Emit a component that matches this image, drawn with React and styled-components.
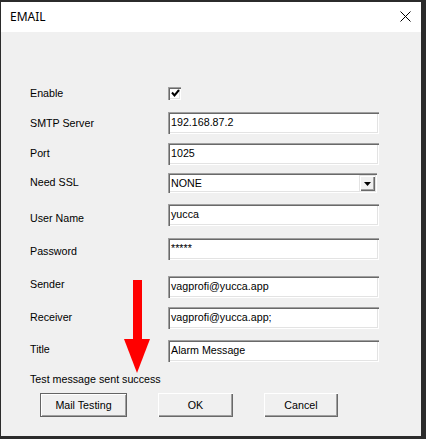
import React from 'react'
import styled, { createGlobalStyle } from 'styled-components'

const GlobalStyle = createGlobalStyle`
    html, body {
        margin: 0;
        padding: 0;
        background: #2b2b2b;
    }
    body {
        font-family: "Liberation Sans", Arial, sans-serif;
    }
`;

const fields = [
    { label: 'SMTP Server', value: '192.168.87.2', top: 8, nudge: 0 },
    { label: 'Port', value: '1025', top: 9, nudge: -1 },
];

const account = [
    { label: 'User Name', value: 'yucca', top: 10, nudge: 3 },
    { label: 'Password', value: '*****', top: 12, nudge: 2 },
    { label: 'Sender', value: 'vagprofi@yucca.app', top: 16, nudge: -3 },
    { label: 'Receiver', value: 'vagprofi@yucca.app;', top: 9, nudge: -1 },
    { label: 'Title', value: 'Alarm Message', top: 11, nudge: -2 },
];

function EmailDialog() {
    return (
        <Window>
            <TitleBar>
                <h1>EMAIL</h1>
                <CloseButton aria-label="close">
                    <svg width="11" height="11" viewBox="0 0 11 11">
                        <path d="M0.5 0.5 L10.5 10.5 M10.5 0.5 L0.5 10.5" stroke="#000" strokeWidth="1" />
                    </svg>
                </CloseButton>
            </TitleBar>
            <Body>
                <Row $top={0}>
                    <Label $nudge={0}>Enable</Label>
                    <CheckBox>
                        <svg width="9" height="9" viewBox="0 0 9 9">
                            <path d="M1 3.5 L3.5 6.5 L8 1" stroke="#000" strokeWidth="2" fill="none" />
                        </svg>
                    </CheckBox>
                </Row>
                {fields.map(({ label, value, top, nudge }) => (
                    <Row key={label} $top={top}>
                        <Label $nudge={nudge}>{label}</Label>
                        <Field>{value}</Field>
                    </Row>
                ))}
                <Row $top={7}>
                    <Label $nudge={-1}>Need SSL</Label>
                    <Select>
                        <span>NONE</span>
                        <DropButton>
                            <svg width="7" height="4" viewBox="0 0 7 4">
                                <path d="M0 0 H7 L3.5 4 Z" fill="#000" />
                            </svg>
                        </DropButton>
                    </Select>
                </Row>
                {account.map(({ label, value, top, nudge }) => (
                    <Row key={label} $top={top}>
                        <Label $nudge={nudge}>{label}</Label>
                        <Field>{value}</Field>
                    </Row>
                ))}
                <Status>Test message sent success</Status>
                <Buttons>
                    <Button $width={87} $default>Mail Testing</Button>
                    <Button $width={75}>OK</Button>
                    <Button $width={74}>Cancel</Button>
                </Buttons>
            </Body>
            <Arrow width="32" height="98" viewBox="0 0 32 98">
                <rect x="12" y="2" width="9" height="61" fill="#ff0000" />
                <path d="M3 61 H29 L16 95 Z" fill="#ff0000" />
            </Arrow>
        </Window>
    )
}

const Window = styled.div`
    position: relative;
    width: 420px;
    height: 434px;
    margin: 2px 0 0 1px;
    background: #f0f0f0;
    display: flex;
    flex-direction: column;
`;

const TitleBar = styled.div`
    height: 30px;
    background: #ffffff;
    display: flex;
    align-items: center;
    justify-content: space-between;
    padding: 0 10px 0 9px;
    h1 {
        margin: 0;
        font-family: "Noto Sans", "Open Sans", sans-serif;
        font-size: 12px;
        font-weight: 400;
        color: #000;
        padding-bottom: 1px;
    }
`;

const CloseButton = styled.div`
    display: flex;
    margin-top: -1px;
`;

const Body = styled.div`
    padding: 50px 0 0 29px;
    display: flex;
    flex-direction: column;
    font-size: 10.7px;
    color: #000;
`;

const Row = styled.div`
    display: flex;
    align-items: center;
    height: 22px;
    margin-top: ${p => p.$top}px;
`;

const Label = styled.div`
    width: 138px;
    align-self: flex-start;
    line-height: 12px;
    padding-top: ${p => 5 + p.$nudge}px;
`;

const sunken = `
    background: #ffffff;
    box-sizing: border-box;
    box-shadow:
        inset 1px 1px 0 #a0a0a0,
        inset 2px 2px 0 #696969,
        inset -1px -1px 0 #ffffff,
        inset -2px -2px 0 #e3e3e3;
`;

const CheckBox = styled.div`
    ${sunken}
    width: 13px;
    height: 13px;
    display: flex;
    align-items: center;
    justify-content: center;
    padding: 1px 0 0 1px;
`;

const Field = styled.div`
    ${sunken}
    width: 211px;
    height: 22px;
    padding: 3px 3px 0 3px;
    line-height: 14px;
    white-space: nowrap;
`;

const Select = styled.div`
    ${sunken}
    width: 209px;
    height: 20px;
    display: flex;
    align-items: center;
    justify-content: space-between;
    padding: 2px 2px 2px 3px;
`;

const DropButton = styled.div`
    width: 16px;
    height: 16px;
    box-sizing: border-box;
    background: #f0f0f0;
    display: flex;
    align-items: center;
    justify-content: center;
    padding-top: 1px;
    box-shadow:
        inset 1px 1px 0 #e3e3e3,
        inset 2px 2px 0 #ffffff,
        inset -1px -1px 0 #696969,
        inset -2px -2px 0 #a0a0a0;
`;

const Status = styled.div`
    margin-top: 11px;
    line-height: 12px;
`;

const Buttons = styled.div`
    display: flex;
    gap: 31px;
    margin: 8px 0 0 10px;
`;

const Button = styled.div`
    width: ${p => p.$width}px;
    height: 24px;
    box-sizing: border-box;
    background: #f0f0f0;
    display: flex;
    align-items: center;
    justify-content: center;
    box-shadow: ${p => p.$default
        ? 'inset 0 0 0 1px #646464, inset 2px 2px 0 #ffffff, inset -2px -2px 0 #a0a0a0'
        : 'inset 1px 1px 0 #ffffff, inset -1px -1px 0 #696969, inset -2px -2px 0 #a0a0a0'};
`;

const Arrow = styled.svg`
    position: absolute;
    left: 120px;
    top: 276px;
    pointer-events: none;
`;

export default function App() {
    return (
        <>
            <GlobalStyle />
            <EmailDialog />
        </>
    )
}
